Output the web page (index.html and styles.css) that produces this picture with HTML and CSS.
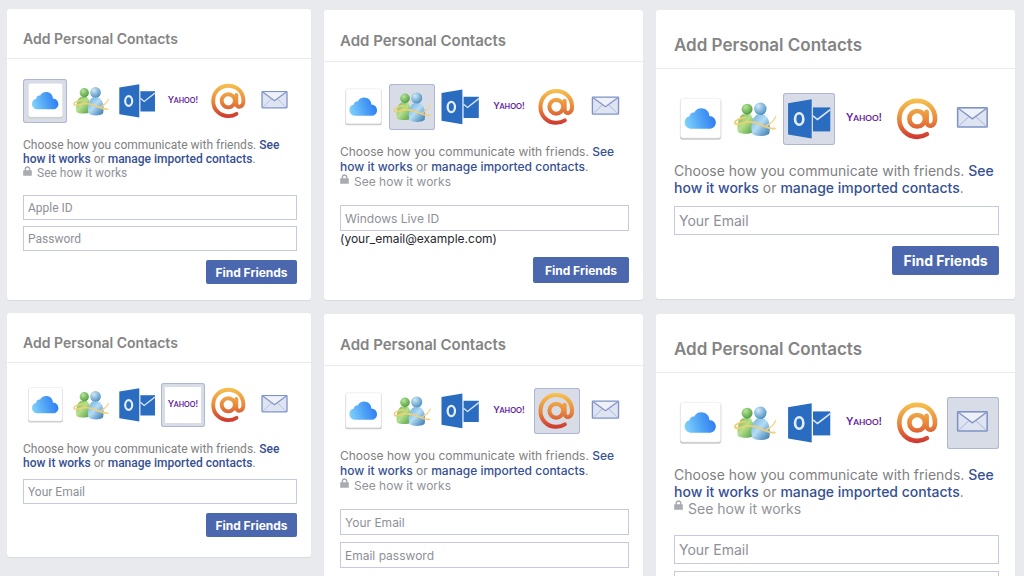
FILE: index.html
```html
<!DOCTYPE html>
<html lang="en">
<head>
<meta charset="utf-8">
<meta name="viewport" content="width=device-width, initial-scale=1">
<title>Add Personal Contacts</title>
<link rel="stylesheet" href="styles.css">
</head>
<body>
<svg class="sprite" width="0" height="0" aria-hidden="true">
  <defs>
    <linearGradient id="cloudFill" x1="0" y1="0.6" x2="1" y2="0.4"><stop offset="0" stop-color="#7fd0fb"/><stop offset="0.5" stop-color="#4fa3f5"/><stop offset="1" stop-color="#2b7bf2"/></linearGradient>
    <linearGradient id="atFill" gradientUnits="userSpaceOnUse" x1="0" y1="5" x2="0" y2="39"><stop offset="0" stop-color="#f6c24f"/><stop offset="0.5" stop-color="#e98a3c"/><stop offset="1" stop-color="#cd352f"/></linearGradient>
    <radialGradient id="greenHead" cx="0.35" cy="0.3" r="0.75"><stop offset="0" stop-color="#b9e59a"/><stop offset="1" stop-color="#4c9c3c"/></radialGradient>
    <linearGradient id="greenBody" x1="0" x2="1" y1="0" y2="1"><stop offset="0" stop-color="#6db856"/><stop offset="0.45" stop-color="#b5e08c"/><stop offset="1" stop-color="#4b9a48"/></linearGradient>
    <radialGradient id="blueHead" cx="0.35" cy="0.3" r="0.75"><stop offset="0" stop-color="#cfe9f8"/><stop offset="1" stop-color="#4a8dbf"/></radialGradient>
    <linearGradient id="blueBody" x1="0" x2="1" y1="0" y2="1"><stop offset="0" stop-color="#6aaedb"/><stop offset="0.45" stop-color="#b5dcf5"/><stop offset="1" stop-color="#2f72ac"/></linearGradient>
  </defs>
  <symbol id="icloud" viewBox="0 0 44 44">
    <rect x="5" y="5" width="35" height="34.5" rx="2.5" fill="#c9c9cb"/>
    <rect x="5.5" y="4.5" width="34" height="33.5" rx="2" fill="#fff" stroke="#e8e8ea" stroke-width="0.6"/>
    <path d="M15 30.3c-3.500 0-6-2.200-6-5.300 0-2.800 1.700-4.800 4.200-5.300.2-2.200 1.800-3.500 3.900-3.200C18.300 14.300 20.500 13 23 13c4 0 6.700 2.700 7 6.500 3.100.2 5.400 2.500 5.400 5.500 0 3.100-2.300 5.300-5.500 5.300z" fill="url(#cloudFill)"/>
  </symbol>
  <symbol id="messenger" viewBox="0 0 44 44">
    <path d="M7.500 33c-1-6 .5-13 4-15h6.500c2.500 2 4 9 3 15-3 2-10.500 2-13.500 0z" fill="url(#greenBody)"/>
    <circle cx="15.300" cy="13.700" r="4.600" fill="url(#greenHead)"/>
    <path d="M19.500 34.500c-1.500-6.500 0-13.500 4-16h6.500c4 2.500 5.500 9.500 4 16-3 2.500-11.500 2.500-14.500 0z" fill="url(#blueBody)"/>
    <circle cx="26.500" cy="13.400" r="5.300" fill="url(#blueHead)"/>
    <path d="M14 20.700c-5 .5-9 2.500-9 4.300 0 2 3 1.700 6 .5 5.500-2 11-1 17 1.800 4.500 2 8.500 3.300 10.800 2.700" fill="none" stroke="#f3ce72" stroke-width="1.500" stroke-linecap="round"/>
    <path d="M32 27.500c4-2 6.500-4.500 7.500-7.500" fill="none" stroke="#f3d58a" stroke-width="1.200" stroke-linecap="round"/>
  </symbol>
  <symbol id="outlook" viewBox="0 0 44 44">
    <path d="M4.300 8.600 24.300 5.200v33.400L4.300 35.200z" fill="#2a6cc0"/>
    <ellipse cx="13.700" cy="22" rx="3.500" ry="4.900" fill="none" stroke="#e6eefb" stroke-width="2.200"/>
    <path d="M25.400 12.200H40v20.300H25.400z" fill="#2a6cc0"/>
    <path d="M25.400 19.300l3.800 3.100L40 14" fill="none" stroke="#dce7f8" stroke-width="1.300"/>
  </symbol>
  <symbol id="at" viewBox="0 0 44 44">
    <g fill="none" stroke="url(#atFill)" stroke-width="3.900" stroke-linecap="round">
      <circle cx="21.300" cy="21.800" r="6.600"/>
      <path d="M29.300 16v8.200c0 5 7.100 5 7.100-2.400C36.400 13 30 6.700 21.300 6.700S6.200 13.300 6.200 21.900s6.500 15.200 15.100 15.200c3.300 0 5.700-.7 8.200-2.300"/>
    </g>
  </symbol>
  <symbol id="mail" viewBox="0 0 44 44">
    <rect x="9" y="12.600" width="25" height="16.200" rx="0.500" fill="#dfe4f3" stroke="#7f92c4" stroke-width="1.300"/>
    <path d="M10 28l8.500-8M33 28l-8.500-8" stroke="#b8c3e0" stroke-width="1" fill="none"/>
    <path d="M10 13.300l11.500 8.500L33 13.300" fill="#eef1f9" stroke="#8495c3" stroke-width="1.200"/>
  </symbol>
  <symbol id="lock" viewBox="0 0 9 10">
    <path d="M2.300 5V3.200a2.200 2.200 0 0 1 4.400 0V5" fill="none" stroke="#a9abb2" stroke-width="1.400"/>
    <rect x="0.200" y="4.300" width="8.600" height="5.500" rx="0.500" fill="#a9abb2"/>
  </symbol>
</svg>

<main class="board">
  <div class="column column-small">
    <section class="card">
      <h2 class="card-title">Add Personal Contacts</h2>
      <form class="card-body">
        <div class="providers">
          <button type="button" class="provider selected" aria-label="iCloud"><svg><use href="#icloud"/></svg></button>
          <button type="button" class="provider" aria-label="Windows Live"><svg><use href="#messenger"/></svg></button>
          <button type="button" class="provider" aria-label="Outlook"><svg><use href="#outlook"/></svg></button>
          <button type="button" class="provider"><svg viewBox="0 0 44 44"><text class="yahoo-word" x="22" y="24"><tspan class="tall">Y</tspan>AHOO<tspan class="tall">!</tspan></text></svg></button>
          <button type="button" class="provider" aria-label="Email"><svg><use href="#at"/></svg></button>
          <button type="button" class="provider" aria-label="Other mail"><svg><use href="#mail"/></svg></button>
        </div>
        <p class="intro">Choose how you communicate with friends. <a href="#how">See how it works</a> or <a href="#manage">manage imported contacts</a>.</p>
        <p class="privacy"><svg class="lock" aria-hidden="true"><use href="#lock"/></svg>See how it works</p>
        <div class="fields">
          <input class="field" type="text" placeholder="Apple ID" aria-label="Apple ID">
          <input class="field" type="password" placeholder="Password" aria-label="Password">
        </div>
        <button type="button" class="submit">Find Friends</button>
      </form>
    </section>
    <section class="card">
      <h2 class="card-title">Add Personal Contacts</h2>
      <form class="card-body compact">
        <div class="providers">
          <button type="button" class="provider" aria-label="iCloud"><svg><use href="#icloud"/></svg></button>
          <button type="button" class="provider" aria-label="Windows Live"><svg><use href="#messenger"/></svg></button>
          <button type="button" class="provider" aria-label="Outlook"><svg><use href="#outlook"/></svg></button>
          <button type="button" class="provider selected tile"><svg viewBox="0 0 44 44"><rect x="4" y="4" width="36" height="36" fill="#fff"/><text class="yahoo-word" x="22" y="24"><tspan class="tall">Y</tspan>AHOO<tspan class="tall">!</tspan></text></svg></button>
          <button type="button" class="provider" aria-label="Email"><svg><use href="#at"/></svg></button>
          <button type="button" class="provider" aria-label="Other mail"><svg><use href="#mail"/></svg></button>
        </div>
        <p class="intro">Choose how you communicate with friends. <a href="#how">See how it works</a> or <a href="#manage">manage imported contacts</a>.</p>
        <div class="fields">
          <input class="field" type="email" placeholder="Your Email" aria-label="Your Email">
        </div>
        <button type="button" class="submit">Find Friends</button>
      </form>
    </section>
  </div>

  <div class="column column-medium">
    <section class="card">
      <h2 class="card-title">Add Personal Contacts</h2>
      <form class="card-body">
        <div class="providers">
          <button type="button" class="provider" aria-label="iCloud"><svg><use href="#icloud"/></svg></button>
          <button type="button" class="provider selected" aria-label="Windows Live"><svg><use href="#messenger"/></svg></button>
          <button type="button" class="provider" aria-label="Outlook"><svg><use href="#outlook"/></svg></button>
          <button type="button" class="provider"><svg viewBox="0 0 44 44"><text class="yahoo-word" x="22" y="24"><tspan class="tall">Y</tspan>AHOO<tspan class="tall">!</tspan></text></svg></button>
          <button type="button" class="provider" aria-label="Email"><svg><use href="#at"/></svg></button>
          <button type="button" class="provider" aria-label="Other mail"><svg><use href="#mail"/></svg></button>
        </div>
        <p class="intro">Choose how you communicate with friends. <a href="#how">See how it works</a> or <a href="#manage">manage imported contacts</a>.</p>
        <p class="privacy"><svg class="lock" aria-hidden="true"><use href="#lock"/></svg>See how it works</p>
        <div class="fields">
          <input class="field" type="text" placeholder="Windows Live ID" aria-label="Windows Live ID" aria-describedby="live-hint">
        </div>
        <p class="hint" id="live-hint">(your_email@example.com)</p>
        <button type="button" class="submit">Find Friends</button>
      </form>
    </section>
    <section class="card">
      <h2 class="card-title">Add Personal Contacts</h2>
      <form class="card-body">
        <div class="providers">
          <button type="button" class="provider" aria-label="iCloud"><svg><use href="#icloud"/></svg></button>
          <button type="button" class="provider" aria-label="Windows Live"><svg><use href="#messenger"/></svg></button>
          <button type="button" class="provider" aria-label="Outlook"><svg><use href="#outlook"/></svg></button>
          <button type="button" class="provider"><svg viewBox="0 0 44 44"><text class="yahoo-word" x="22" y="24"><tspan class="tall">Y</tspan>AHOO<tspan class="tall">!</tspan></text></svg></button>
          <button type="button" class="provider selected" aria-label="Email"><svg><use href="#at"/></svg></button>
          <button type="button" class="provider" aria-label="Other mail"><svg><use href="#mail"/></svg></button>
        </div>
        <p class="intro">Choose how you communicate with friends. <a href="#how">See how it works</a> or <a href="#manage">manage imported contacts</a>.</p>
        <p class="privacy"><svg class="lock" aria-hidden="true"><use href="#lock"/></svg>See how it works</p>
        <div class="fields">
          <input class="field" type="email" placeholder="Your Email" aria-label="Your Email">
          <input class="field" type="password" placeholder="Email password" aria-label="Email password">
        </div>
      </form>
    </section>
  </div>

  <div class="column column-large">
    <section class="card">
      <h2 class="card-title">Add Personal Contacts</h2>
      <form class="card-body compact">
        <div class="providers">
          <button type="button" class="provider" aria-label="iCloud"><svg><use href="#icloud"/></svg></button>
          <button type="button" class="provider" aria-label="Windows Live"><svg><use href="#messenger"/></svg></button>
          <button type="button" class="provider selected" aria-label="Outlook"><svg><use href="#outlook"/></svg></button>
          <button type="button" class="provider"><svg viewBox="0 0 44 44"><text class="yahoo-word" x="22" y="24"><tspan class="tall">Y</tspan>AHOO<tspan class="tall">!</tspan></text></svg></button>
          <button type="button" class="provider" aria-label="Email"><svg><use href="#at"/></svg></button>
          <button type="button" class="provider" aria-label="Other mail"><svg><use href="#mail"/></svg></button>
        </div>
        <p class="intro">Choose how you communicate with friends. <a href="#how">See how it works</a> or <a href="#manage">manage imported contacts</a>.</p>
        <div class="fields">
          <input class="field" type="email" placeholder="Your Email" aria-label="Your Email">
        </div>
        <button type="button" class="submit">Find Friends</button>
      </form>
    </section>
    <section class="card">
      <h2 class="card-title">Add Personal Contacts</h2>
      <form class="card-body">
        <div class="providers">
          <button type="button" class="provider" aria-label="iCloud"><svg><use href="#icloud"/></svg></button>
          <button type="button" class="provider" aria-label="Windows Live"><svg><use href="#messenger"/></svg></button>
          <button type="button" class="provider" aria-label="Outlook"><svg><use href="#outlook"/></svg></button>
          <button type="button" class="provider"><svg viewBox="0 0 44 44"><text class="yahoo-word" x="22" y="24"><tspan class="tall">Y</tspan>AHOO<tspan class="tall">!</tspan></text></svg></button>
          <button type="button" class="provider" aria-label="Email"><svg><use href="#at"/></svg></button>
          <button type="button" class="provider selected" aria-label="Other mail"><svg><use href="#mail"/></svg></button>
        </div>
        <p class="intro">Choose how you communicate with friends. <a href="#how">See how it works</a> or <a href="#manage">manage imported contacts</a>.</p>
        <p class="privacy"><svg class="lock" aria-hidden="true"><use href="#lock"/></svg>See how it works</p>
        <div class="fields">
          <input class="field" type="email" placeholder="Your Email" aria-label="Your Email">
          <input class="field" type="text" aria-label="Email password">
        </div>
      </form>
    </section>
  </div>
</main>
</body>
</html>
```
FILE: styles.css
```css
* { box-sizing: border-box; }

body {
  margin: 0;
  height: 100vh;
  overflow: hidden;
  background: #e9eaee;
  color: #7f7f82;
  font-family: Inter, "Liberation Sans", sans-serif;
}

h2, p { margin: 0; }

.sprite { position: absolute; }

.board {
  display: grid;
  grid-template-columns: 304fr 319fr 359fr;
  gap: 13px;
  align-items: start;
  padding: 9px 9px 0 7px;
}

.column {
  display: flex;
  flex-direction: column;
}

.column-small {
  --copy-font: Roboto, sans-serif;
  --text: 12px; --line: 14px; --title: 14px; --label: 12px; --head: 50px; --head-pad: 9px;
  --icon: 44px; --top: 20px; --space: 15px;
  --field: 25px; --field-gap: 6px; --lead: 15px; --tight: 9px;
  --button: 91px; --button-height: 24px; --button-gap: 9px;
  --left: 16px; --right: 14px; --end: 16px; --end-compact: 20px;
  gap: 13px;
}

.column-medium {
  --copy-font: Inter, sans-serif;
  --text: 12px; --line: 15px; --title: 15px; --label: 12px; --head: 52px; --head-pad: 9px;
  --icon: 46px; --top: 22px; --space: 14px;
  --field: 26px; --field-gap: 7px; --lead: 16px; --tight: 10px;
  --button: 96px; --button-height: 26px; --button-gap: 11px;
  --left: 16px; --right: 14px; --end: 17px; --end-compact: 17px;
  gap: 14px;
  padding-top: 1px;
}

.column-large {
  --copy-font: Inter, sans-serif;
  --text: 14px; --line: 17px; --title: 17px; --label: 14px; --head: 59px; --head-pad: 11px;
  --icon: 52px; --top: 24px; --space: 17px;
  --field: 29px; --field-gap: 7px; --lead: 18px; --tight: 10px;
  --button: 107px; --button-height: 29px; --button-gap: 11px;
  --left: 18px; --right: 16px; --end: 24px; --end-compact: 24px;
  gap: 15px;
  padding-top: 1px;
}

.card {
  background: #fff;
  border-radius: 3px;
  box-shadow: 0 1px 1px #d9dadf;
}

.card-title {
  height: var(--head);
  padding: var(--head-pad) var(--right) 0 var(--left);
  border-bottom: 1px solid #e9eaec;
  color: #848484;
  font-size: var(--title);
  font-weight: 600;
  line-height: calc(var(--head) - var(--head-pad));
}

.card-body {
  display: flex;
  flex-direction: column;
  padding: var(--top) var(--right) var(--end) var(--left);
}

.card-body.compact { padding-bottom: var(--end-compact); }

.providers {
  display: flex;
  justify-content: space-between;
  margin-bottom: var(--space);
}

.provider {
  width: var(--icon);
  height: var(--icon);
  padding: 0;
  border: 0;
  border-radius: 3px;
  background: none;
}

.provider svg {
  display: block;
  width: 100%;
  height: 100%;
}

.selected {
  background: #d8dce6;
  box-shadow: inset 0 0 0 1px #aeb6d6;
}

.yahoo-word {
  fill: #64229c;
  font-family: Lato, sans-serif;
  font-size: 7px;
  font-weight: 700;
  text-anchor: middle;
}

.yahoo-word .tall { font-size: 9px; }

.intro, .privacy, .hint {
  font-family: var(--copy-font);
  font-size: var(--text);
  line-height: var(--line);
}

.intro a {
  color: #365093;
  font-weight: 500;
  text-decoration: none;
}

.privacy {
  display: flex;
  gap: 5px;
  color: #919399;
}

.lock {
  width: 9px;
  height: 10px;
}

.fields {
  display: flex;
  flex-direction: column;
  gap: var(--field-gap);
  margin-top: var(--tight);
}

.privacy + .fields { margin-top: var(--lead); }

.field {
  width: 100%;
  height: var(--field);
  padding: 0 4px;
  border: 1px solid #c5cbdd;
  border-radius: 0;
  background: #fff;
  color: #333;
  font-family: var(--copy-font);
  font-size: var(--text);
}

.field::placeholder { color: #8e9097; opacity: 1; }

.hint { color: #26272b; }

.submit {
  align-self: flex-end;
  width: var(--button);
  height: var(--button-height);
  margin-top: var(--button-gap);
  padding: 0;
  border: 0;
  border-radius: 2px;
  background: #4b67ad;
  color: #fff;
  font: inherit;
  font-size: var(--label);
  font-weight: 700;
}
```
